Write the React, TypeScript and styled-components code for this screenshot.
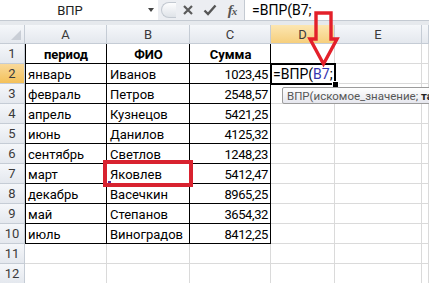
import { Fragment } from "react";
import styled, { createGlobalStyle } from "styled-components";

const GlobalStyle = createGlobalStyle`
    html, body {
        margin: 0;
        padding: 0;
        background: #fff;
    }
    body {
        font-family: Roboto, "Liberation Sans", sans-serif;
        color: #000;
    }
`;

const Window = styled.div`
    position: relative;
    width: 429px;
    height: 283px;
    overflow: hidden;
    background: #fff;
`;

const FormulaBar = styled.div`
    display: flex;
    align-items: stretch;
    height: 20px;
    border-bottom: 1px solid #c4cad2;
    background: #eceef2;
`;

const NameBox = styled.div`
    width: 158px;
    background: #fff;
    display: flex;
    align-items: center;
    font-size: 13px;
    color: #222;

    .name {
        width: 140px;
        text-align: center;
    }

    .drop {
        width: 0;
        height: 0;
        border-left: 3.5px solid transparent;
        border-right: 3.5px solid transparent;
        border-top: 4px solid #444;
        margin-left: 8px;
    }
`;

const Splitter = styled.div`
    width: 14px;
    margin: 2px 0 2px 3px;
    border: 1px solid #c3c9d1;
    border-right: none;
    border-radius: 9px 0 0 9px;
    background: linear-gradient(#fdfdfe, #dfe3e8);
`;

const BarButton = styled.div<{ $w: number }>`
    width: ${(p) => p.$w}px;
    display: flex;
    align-items: center;
    justify-content: center;
    color: #555;
`;

const FxLabel = styled.span`
    font-family: "Liberation Serif", "DejaVu Serif", serif;
    font-style: italic;
    font-weight: bold;
    font-size: 15px;
    color: #555;
    letter-spacing: -1px;

    small {
        font-size: 11px;
    }
`;

const FormulaInput = styled.div`
    flex: 1;
    background: #fff;
    border-left: 1px solid #c4cad2;
    display: flex;
    align-items: center;
    padding-left: 7px;
    font-size: 14px;
`;

const Gap = styled.div`
    height: 4px;
    background: #e6e9ed;
`;

const Sheet = styled.div`
    display: grid;
    grid-template-columns: 25px 82px 83px 81px 64px 87px 1fr;
    grid-template-rows: 19px;
    grid-auto-rows: 20px;
    font-size: 13px;
`;

const Header = styled.div<{ $active?: boolean; $strong?: boolean }>`
    display: flex;
    align-items: center;
    justify-content: center;
    color: #3a3a3a;
    background: ${(p) =>
        p.$strong
            ? "linear-gradient(#f9d99a, #f4c15a)"
            : p.$active
              ? "linear-gradient(#fce6b2, #f6cf7d)"
              : "linear-gradient(#f5f7fa, #e4e8ee)"};
    border-right: 1px solid #c5ccd5;
    border-bottom: 1px solid #c5ccd5;
`;

const Corner = styled(Header)`
    position: relative;

    &::after {
        content: "";
        position: absolute;
        right: 3px;
        bottom: 3px;
        border-left: 10px solid transparent;
        border-bottom: 10px solid #c9ced6;
    }
`;

const Cell = styled.div<{
    $boxed?: boolean;
    $left?: boolean;
    $align?: "left" | "center" | "right";
    $bold?: boolean;
}>`
    display: flex;
    align-items: center;
    justify-content: ${(p) =>
        p.$align === "right" ? "flex-end" : p.$align === "center" ? "center" : "flex-start"};
    padding: 0 3px;
    white-space: nowrap;
    font-weight: ${(p) => (p.$bold ? 700 : 400)};
    letter-spacing: ${(p) => (p.$align === "right" ? "-0.4px" : "0")};
    box-shadow: ${(p) =>
        p.$boxed
            ? `inset -1px -1px 0 #000${p.$left ? ", inset 1px 0 0 #000" : ""}`
            : "inset -1px -1px 0 #dadada"};
`;

const ActiveCell = styled(Cell)`
    position: relative;
    z-index: 2;
    outline: 2px solid #000;
    outline-offset: -1px;
    padding-left: 2px;
    font-size: 14px;

    .ref {
        color: #3535b0;
    }

    .caret {
        width: 1px;
        height: 15px;
        background: #000;
        margin-left: 2px;
    }

    .handle {
        position: absolute;
        right: -4px;
        bottom: -4px;
        width: 5px;
        height: 5px;
        background: #000;
        border: 1px solid #fff;
    }
`;

const Tooltip = styled.div`
    position: absolute;
    left: 282px;
    top: 87px;
    height: 15px;
    padding: 0 4px;
    display: flex;
    align-items: center;
    white-space: pre;
    border: 1px solid #9c9c9c;
    border-radius: 2px;
    background: linear-gradient(#ffffff, #e6e7ee);
    font-size: 11.5px;
    color: #575757;
    z-index: 3;

    b {
        color: #222;
    }
`;

const RefMark = styled.div`
    position: absolute;
    left: 108px;
    top: 181px;
    width: 3px;
    height: 3px;
    background: #5b2a9a;
    z-index: 3;
`;

const RedFrame = styled.div`
    position: absolute;
    left: 103px;
    top: 160px;
    width: 82px;
    height: 19px;
    border: 4px solid #d8222f;
    z-index: 4;
`;

const Arrow = styled.svg`
    position: absolute;
    left: 305px;
    top: 8px;
    z-index: 4;
    overflow: visible;
`;

const rows: [string, string, string][] = [
    ["январь", "Иванов", "1023,45"],
    ["февраль", "Петров", "2548,57"],
    ["апрель", "Кузнецов", "5421,25"],
    ["июнь", "Данилов", "4125,32"],
    ["сентябрь", "Светлов", "1248,23"],
    ["март", "Яковлев", "5412,47"],
    ["декабрь", "Васечкин", "8965,25"],
    ["май", "Степанов", "3654,32"],
    ["июль", "Виноградов", "8412,25"],
];

const columns = ["A", "B", "C", "D", "E", ""];

export default function App() {
    return (
        <Window>
            <GlobalStyle />
            <FormulaBar>
                <NameBox>
                    <span className="name">ВПР</span>
                    <span className="drop" />
                </NameBox>
                <Splitter />
                <BarButton $w={24}>
                    <svg width="12" height="12" viewBox="0 0 12 12">
                        <path d="M2 2 L10 10 M10 2 L2 10" stroke="#5a5a5a" strokeWidth="2.2" />
                    </svg>
                </BarButton>
                <BarButton $w={20}>
                    <svg width="14" height="12" viewBox="0 0 14 12">
                        <path d="M1.5 6.5 L5 10 L12.5 1.5" stroke="#555" strokeWidth="2.4" fill="none" />
                    </svg>
                </BarButton>
                <BarButton $w={24}>
                    <FxLabel>
                        f<small>x</small>
                    </FxLabel>
                </BarButton>
                <FormulaInput>=ВПР(B7;</FormulaInput>
            </FormulaBar>
            <Gap />
            <Sheet>
                <Corner />
                {columns.map((c) => (
                    <Header key={c || "F"} $active={c === "D"}>
                        {c}
                    </Header>
                ))}

                <Header>1</Header>
                <Cell $boxed $left $align="center" $bold>
                    период
                </Cell>
                <Cell $boxed $align="center" $bold>
                    ФИО
                </Cell>
                <Cell $boxed $align="center" $bold>
                    Сумма
                </Cell>
                <Cell />
                <Cell />
                <Cell />

                {rows.map(([period, name, sum], i) => (
                    <Fragment key={period}>
                        <Header $strong={i === 0}>{i + 2}</Header>
                        <Cell $boxed $left>
                            {period}
                        </Cell>
                        <Cell $boxed>{name}</Cell>
                        <Cell $boxed $align="right">
                            {sum}
                        </Cell>
                        {i === 0 ? (
                            <ActiveCell>
                                =ВПР(<span className="ref">B7</span>;
                                <span className="caret" />
                                <span className="handle" />
                            </ActiveCell>
                        ) : (
                            <Cell />
                        )}
                        <Cell />
                        <Cell />
                    </Fragment>
                ))}

                {[11, 12].map((n) => (
                    <Fragment key={n}>
                        <Header>{n}</Header>
                        {columns.map((c) => (
                            <Cell key={c || "F"} />
                        ))}
                    </Fragment>
                ))}
            </Sheet>

            <Tooltip>
                <span>ВПР(искомое_значение; </span>
                <b>таблица</b>
                <span>; номер_столбца; [интервальный_просмотр])</span>
            </Tooltip>
            <RefMark />
            <RedFrame />
            <Arrow width="36" height="60" viewBox="0 0 36 60">
                <polygon
                    points="11,5 26,5 26,31 32,31 18.5,56 5,31 11,31"
                    fill="none"
                    stroke="#e3202a"
                    strokeWidth="3.4"
                    strokeLinejoin="miter"
                />
            </Arrow>
        </Window>
    );
}
